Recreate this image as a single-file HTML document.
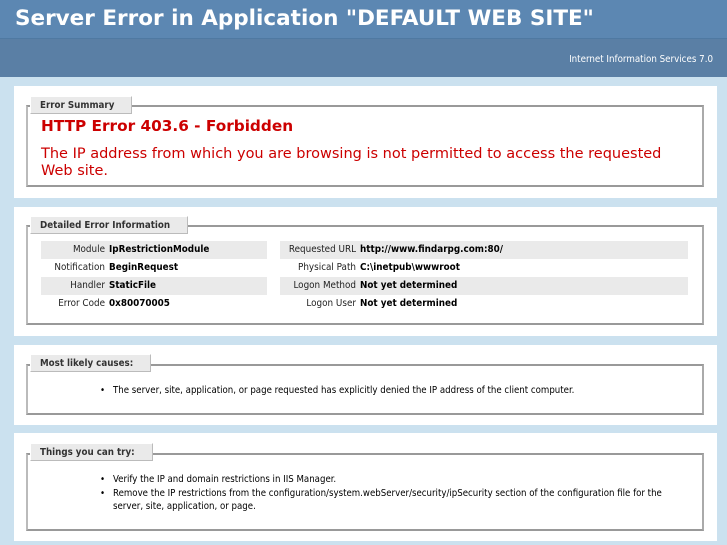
<!DOCTYPE html>
<html><head><meta charset="utf-8"><style>
body{margin:0;width:727px;height:545px;background:#cbe1ef;font-family:"DejaVu Sans Condensed","DejaVu Sans",sans-serif;position:relative;overflow:hidden}
.a{position:absolute}
#h1{left:0;top:0;width:727px;height:38px;background:#5c87b2;border-bottom:1px solid #4f79a2}
#h1 div{position:absolute;left:15px;top:6px;color:#fff;font:bold 21.5px "DejaVu Sans",sans-serif;white-space:nowrap}
#h2{left:0;top:39px;width:727px;height:38px;background:#5a7fa5}
#h2 div{position:absolute;right:14px;top:15px;color:#fff;font-size:9.7px}
.p{background:#fff;left:14px;width:703px}
.f{border:2px solid #999;border-left-color:#bbb;border-right-color:#aaa;left:26px;width:674px;background:#fff}
.lg{left:30px;height:18px;background:#eaeaea;border:1px solid #fff;border-right-color:#bbb;border-bottom-color:#bbb;font-weight:bold;font-size:9.7px;color:#333;line-height:18px;padding-left:9px;box-sizing:border-box}
.r{height:18px;font-size:9.8px;line-height:18px;white-space:nowrap}
.g{background:#eaeaea}
.r span{display:inline-block;text-align:right;color:#222}
.r b{margin-left:4px;color:#000}
.li{font-size:9.6px;color:#000;white-space:nowrap}
.li:before{content:"•";position:absolute;left:-13px}
</style></head><body>
<div id="h1" class="a"><div>Server Error in Application "DEFAULT WEB SITE"</div></div>
<div id="h2" class="a"><div>Internet Information Services 7.0</div></div>

<div class="a p" style="top:86px;height:112px"></div>
<div class="a f" style="top:105px;height:78px"></div>
<div class="a lg" style="top:96px;width:102px">Error Summary</div>
<div class="a" style="left:41px;top:117px;color:#c00;font:bold 15.3px 'DejaVu Sans',sans-serif;white-space:nowrap">HTTP Error 403.6 - Forbidden</div>
<div class="a" style="left:41px;top:146px;width:650px;color:#c00;font:14.5px/17px 'DejaVu Sans',sans-serif">The IP address from which you are browsing is not permitted to access the requested Web site.</div>

<div class="a p" style="top:207px;height:129px"></div>
<div class="a f" style="top:225px;height:96px"></div>
<div class="a lg" style="top:216px;width:158px">Detailed Error Information</div>
<div class="a r g" style="left:41px;top:241px;width:226px"><span style="width:64px">Module</span><b>IpRestrictionModule</b></div>
<div class="a r" style="left:41px;top:259px;width:226px"><span style="width:64px">Notification</span><b>BeginRequest</b></div>
<div class="a r g" style="left:41px;top:277px;width:226px"><span style="width:64px">Handler</span><b>StaticFile</b></div>
<div class="a r" style="left:41px;top:295px;width:226px"><span style="width:64px">Error Code</span><b>0x80070005</b></div>
<div class="a r g" style="left:280px;top:241px;width:408px"><span style="width:76px">Requested URL</span><b>http://www.findarpg.com:80/</b></div>
<div class="a r" style="left:280px;top:259px;width:408px"><span style="width:76px">Physical Path</span><b>C:\inetpub\wwwroot</b></div>
<div class="a r g" style="left:280px;top:277px;width:408px"><span style="width:76px">Logon Method</span><b>Not yet determined</b></div>
<div class="a r" style="left:280px;top:295px;width:408px"><span style="width:76px">Logon User</span><b>Not yet determined</b></div>

<div class="a p" style="top:345px;height:80px"></div>
<div class="a f" style="top:364px;height:47px"></div>
<div class="a lg" style="top:354px;width:121px">Most likely causes:</div>
<div class="a li" style="left:113px;top:385px">The server, site, application, or page requested has explicitly denied the IP address of the client computer.</div>

<div class="a p" style="top:433px;height:108px"></div>
<div class="a f" style="top:453px;height:74px"></div>
<div class="a lg" style="top:443px;width:123px">Things you can try:</div>
<div class="a li" style="left:113px;top:474px">Verify the IP and domain restrictions in IIS Manager.</div>
<div class="a li" style="left:113px;top:487px;white-space:normal;width:565px;line-height:13px">Remove the IP restrictions from the configuration/system.webServer/security/ipSecurity section of the configuration file for the server, site, application, or page.</div>
</body></html>
